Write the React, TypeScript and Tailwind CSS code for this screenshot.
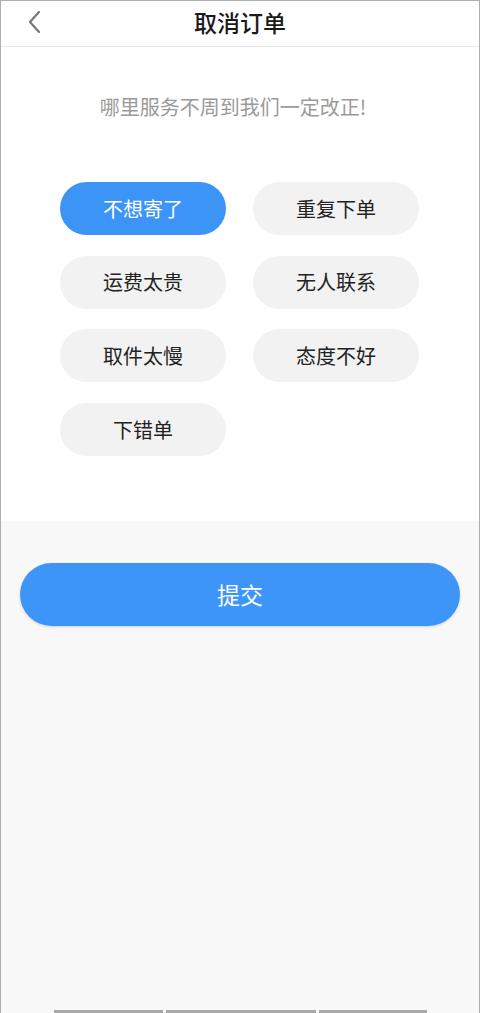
import React from "react";

const reasons = ["不想寄了", "重复下单", "运费太贵", "无人联系", "取件太慢", "态度不好", "下错单"];

export default function App() {
  const font = { fontFamily: '"Noto Sans CJK SC", "Noto Sans", sans-serif' };
  return (
    <div className="w-[480px] h-[1013px] bg-[#f8f8f8] border-x border-t border-[#b0b0b0] flex flex-col relative overflow-hidden" style={font}>
      <div className="h-[46px] bg-white border-b border-[#e8e8e8] flex items-center justify-center relative shrink-0 pb-[3px]">
        <svg className="absolute left-[26px] top-[9px]" width="16" height="24" viewBox="0 0 16 24">
          <path d="M12 2 L3 12 L12 22" fill="none" stroke="#777" strokeWidth="2.2" strokeLinecap="round" strokeLinejoin="round" />
        </svg>
        <span className="text-[23px] text-[#1a1a1a] font-medium leading-none">取消订单</span>
      </div>
      <div className="bg-white pt-[50px] pb-[65px] shrink-0">
        <div className="text-center text-[20px] leading-none text-[#9a9a9a] pr-[14px]">哪里服务不周到我们一定改正!</div>
        <div className="grid grid-cols-[166px_166px] gap-x-[27px] gap-y-[20.7px] pl-[59px] mt-[65px]">
          {reasons.map((r, i) => (
            <div
              key={r}
              className={
                i === 0
                  ? "h-[53px] rounded-full bg-[#3c94f6] text-white flex items-center justify-center text-[20px]"
                  : "h-[53px] rounded-full bg-[#f2f2f2] text-[#222] flex items-center justify-center text-[20px]"
              }
            >
              {r}
            </div>
          ))}
        </div>
      </div>
      <div className="px-[19px] pt-[42px]">
        <div className="h-[63px] rounded-full bg-[#3d95f7] text-white text-[23px] flex items-center justify-center shadow-[0_1px_3px_rgba(0,0,0,0.15)]">
          提交
        </div>
      </div>
      <div className="absolute bottom-0 left-[53px] flex gap-[3px]">
        <div className="w-[109px] h-[3px] bg-[#aaa]" />
        <div className="w-[150px] h-[3px] bg-[#aaa]" />
        <div className="w-[108px] h-[3px] bg-[#aaa]" />
      </div>
    </div>
  );
}
